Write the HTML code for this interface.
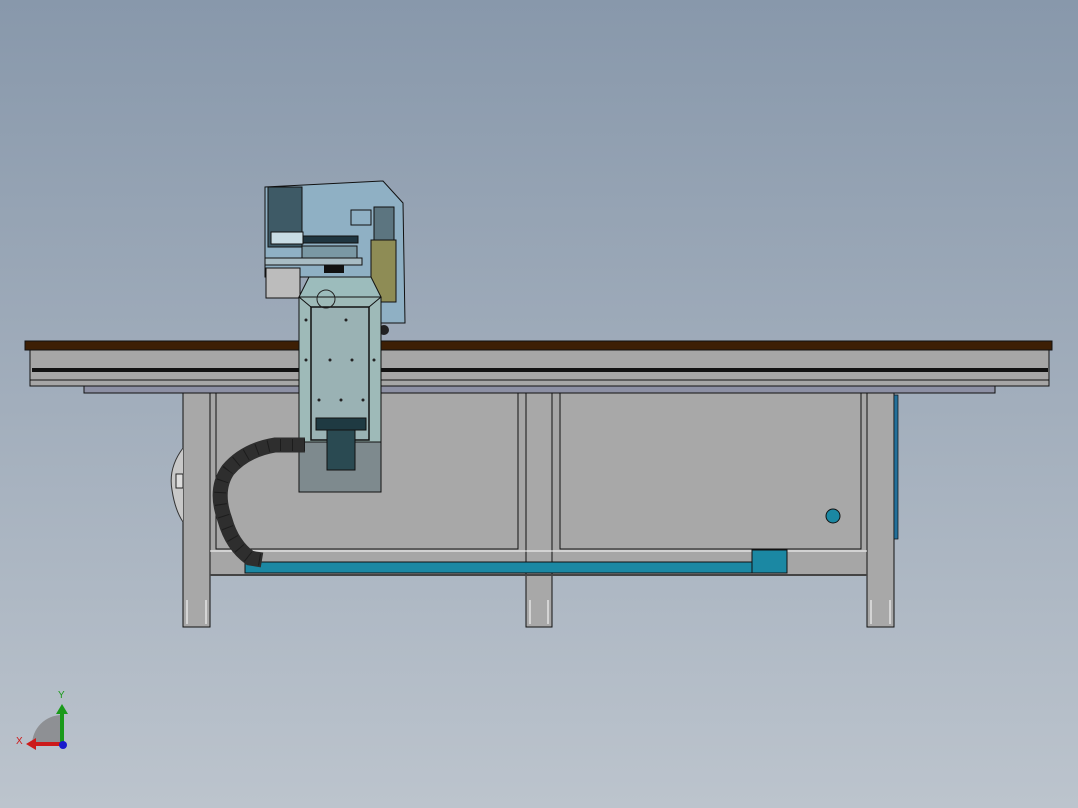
<!DOCTYPE html>
<html><head><meta charset="utf-8"><style>html,body{margin:0;padding:0;width:1078px;height:808px;overflow:hidden}</style></head>
<body>
<svg width="1078" height="808" viewBox="0 0 1078 808" xmlns="http://www.w3.org/2000/svg" font-family="Liberation Sans, sans-serif">
<defs>
<linearGradient id="bg" x1="0" y1="0" x2="0" y2="1"><stop offset="0" stop-color="#8898ab"/><stop offset="1" stop-color="#bcc4cd"/></linearGradient>
</defs>
<rect width="1078" height="808" fill="url(#bg)"/>
<!-- legs -->
<g stroke="#111" stroke-width="1">
<rect x="183" y="393" width="27" height="234" fill="#a8a8a8"/>
<rect x="526" y="393" width="26" height="234" fill="#a8a8a8"/>
<rect x="867" y="393" width="27" height="234" fill="#a8a8a8"/>
<rect x="210" y="393" width="657" height="182" fill="#a6a6a6"/>
<rect x="216" y="393" width="302" height="156" fill="#a8a8a8"/>
<rect x="560" y="393" width="301" height="156" fill="#a8a8a8"/>
<rect x="526" y="393" width="26" height="234" fill="#a8a8a8"/>
</g>
<g stroke="#fff" stroke-width="1" fill="none">
<line x1="187" y1="600" x2="187" y2="624"/><line x1="206" y1="600" x2="206" y2="624"/>
<line x1="530" y1="600" x2="530" y2="624"/><line x1="548" y1="600" x2="548" y2="624"/>
<line x1="871" y1="600" x2="871" y2="624"/><line x1="890" y1="600" x2="890" y2="624"/>
<line x1="210" y1="551" x2="867" y2="551"/>
</g>
<line x1="210" y1="575" x2="867" y2="575" stroke="#444" stroke-width="2"/>
<rect x="245" y="562" width="542" height="11" fill="#1b88a3" stroke="#111"/>
<rect x="752" y="550" width="35" height="23" fill="#1b88a3" stroke="#111"/>
<rect x="894" y="395" width="4" height="144" fill="#23709a" stroke="#111" stroke-width="0.7"/>
<circle cx="833" cy="516" r="7" fill="#1b88a3" stroke="#111"/>
<!-- left wheel thing -->
<path d="M183 448 Q168 468 172 490 Q175 510 183 522" fill="#c8c8c8" stroke="#333"/>
<rect x="176" y="474" width="7" height="14" fill="#ddd" stroke="#222"/>
<!-- beam -->
<rect x="25" y="341" width="1027" height="9" fill="#3d1f05" stroke="#111"/>
<rect x="30" y="350" width="1019" height="36" fill="#a6a6a6" stroke="#111"/>
<rect x="32" y="368" width="1016" height="4" fill="#111"/>
<line x1="30" y1="380" x2="1049" y2="380" stroke="#111"/>
<rect x="84" y="386" width="911" height="7" fill="#8d90a4" stroke="#111"/>
<!-- head upper -->
<path d="M265 187 L383 181 L403 203 L405 323 L371 323 L371 277 L265 277 Z" fill="#8fb0c4" stroke="#111"/>
<rect x="268" y="187" width="34" height="60" fill="#3e5a66" stroke="#111"/>
<rect x="271" y="232" width="32" height="12" fill="#c8dce4" stroke="#111"/>
<rect x="303" y="236" width="55" height="7" fill="#1f3540" stroke="#111"/>
<rect x="302" y="246" width="55" height="12" fill="#7a98a4" stroke="#111"/>
<rect x="265" y="258" width="97" height="7" fill="#a8bcc4" stroke="#111"/>
<rect x="351" y="210" width="20" height="15" fill="none" stroke="#111"/>
<rect x="374" y="207" width="20" height="33" fill="#5c7580" stroke="#111"/>
<rect x="371" y="240" width="25" height="62" fill="#8e8c55" stroke="#111"/>
<rect x="266" y="268" width="34" height="30" fill="#bcbcbc" stroke="#111"/>
<rect x="324" y="265" width="20" height="8" fill="#111"/>
<circle cx="384" cy="330" r="5" fill="#222"/>
<!-- carriage -->
<path d="M299 297 L309 277 L371 277 L381 297 Z" fill="#9cbcbc" stroke="#111"/>
<rect x="299" y="297" width="82" height="145" fill="#9ebab8" stroke="#111"/>
<path d="M299 297 L311 307 M381 297 L369 307" stroke="#111"/>
<rect x="311" y="307" width="58" height="133" fill="#9ab2b4" stroke="#111" stroke-width="1.5"/>
<circle cx="326" cy="299" r="9" fill="none" stroke="#222"/>
<rect x="299" y="442" width="82" height="50" fill="#7e8a8e" stroke="#111"/>
<rect x="316" y="418" width="50" height="12" fill="#1f3a42" stroke="#111"/>
<rect x="327" y="430" width="28" height="40" fill="#2a4a52" stroke="#111"/>
<g fill="#222"><circle cx="330" cy="360" r="1.5"/><circle cx="352" cy="360" r="1.5"/><circle cx="319" cy="400" r="1.5"/><circle cx="341" cy="400" r="1.5"/><circle cx="363" cy="400" r="1.5"/><circle cx="306" cy="360" r="1.5"/><circle cx="374" cy="360" r="1.5"/><circle cx="306" cy="320" r="1.5"/><circle cx="346" cy="320" r="1.5"/></g>
<!-- cable chain -->
<path d="M305 445 L275 445 Q245 450 228 470 Q214 490 225 520 Q232 545 250 558 L262 560" fill="none" stroke="#2e2e2e" stroke-width="15"/>
<path d="M305 445 L275 445 Q245 450 228 470 Q214 490 225 520 Q232 545 250 558 L262 560" fill="none" stroke="#111" stroke-width="12" stroke-dasharray="1 11" opacity="0.6"/>
<!-- triad -->
<path d="M62 745 L32 745 A30 30 0 0 1 62 715 Z" fill="#8e9094"/>
<path d="M62 745 L62 712" stroke="#1a9a1a" stroke-width="4"/>
<path d="M56 714 L62 704 L68 714 Z" fill="#1a9a1a"/>
<path d="M62 744 L34 744" stroke="#cc1a1a" stroke-width="4"/>
<path d="M36 738 L26 744 L36 750 Z" fill="#cc1a1a"/>
<circle cx="63" cy="745" r="4" fill="#1a1acc"/>
<text x="58" y="698" font-size="10" fill="#1a9a1a">Y</text>
<text x="16" y="744" font-size="10" fill="#cc1a1a">X</text>
</svg>
</body></html>
